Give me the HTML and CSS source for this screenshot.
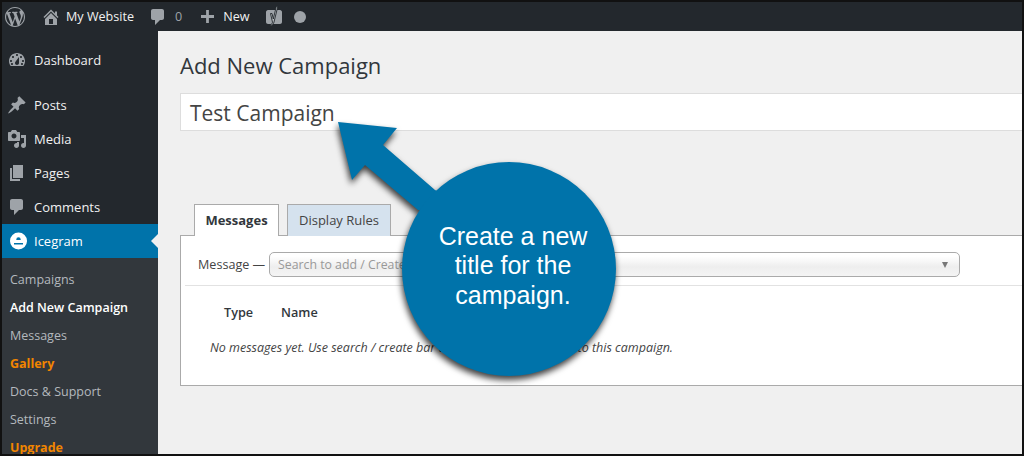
FILE: index.html
```html
<!DOCTYPE html>
<html lang="en">
<head>
<meta charset="utf-8">
<title>Add New Campaign</title>
<link rel="stylesheet" href="styles.css">
</head>
<body>
<div class="frame">
  <header class="adminbar">
    <svg class="bar-icon wp" viewBox="0 0 20 20"><path d="M20 10c0-5.51-4.49-10-10-10C4.48 0 0 4.49 0 10c0 5.52 4.48 10 10 10 5.51 0 10-4.48 10-10zM7.78 15.37L4.37 6.22c.55-.02 1.17-.08 1.17-.08.5-.06.44-1.13-.06-1.11 0 0-1.45.11-2.37.11-.18 0-.37 0-.58-.01C4.12 2.69 6.87 1.11 10 1.11c2.33 0 4.45.87 6.05 2.34-.68-.11-1.65.39-1.65 1.58 0 .74.45 1.36.9 2.1.35.61.55 1.36.55 2.46 0 1.49-1.4 5-1.4 5l-3.03-8.37c.54-.02.82-.17.82-.17.5-.05.44-1.25-.06-1.22 0 0-1.44.12-2.38.12-.87 0-2.33-.12-2.33-.12-.5-.03-.56 1.2-.06 1.22l.92.08 1.26 3.41zM17.41 10c.24-.64.74-1.87.43-4.25.7 1.29 1.05 2.71 1.05 4.25 0 3.29-1.73 6.24-4.4 7.78.97-2.59 1.94-5.2 2.92-7.78zM6.1 18.09C3.12 16.65 1.11 13.53 1.11 10c0-1.3.23-2.48.72-3.59C3.25 10.3 4.67 14.2 6.1 18.09zm4.03-6.63l2.58 6.98c-.86.29-1.76.45-2.71.45-.79 0-1.57-.11-2.29-.33.81-2.38 1.62-4.74 2.42-7.1z"/></svg>
    <svg class="bar-icon home" viewBox="0 0 20 20"><path d="M16 8.5l1.53 1.53-1.06 1.06L10 4.62l-6.47 6.47-1.06-1.06L10 2.5l4 4v-2h2v4zm-6-2.46l6 5.99V18H4v-5.97zM12 17v-5H8v5h4z"/></svg>
    <span class="bar-text site">My Website</span>
    <svg class="bar-icon bubble" viewBox="0 0 20 20"><path d="M5 2h9c1.100 0 2 .9 2 2v7c0 1.100-.9 2-2 2h-2l-5 5v-5H5c-1.100 0-2-.9-2-2V4c0-1.100.9-2 2-2z"/></svg>
    <span class="bar-text count">0</span>
    <svg class="bar-icon plus" viewBox="0 0 14 14"><path d="M5.500 0h3v5.500H14v3H8.500V14h-3V8.500H0v-3h5.500z"/></svg>
    <span class="bar-text new">New</span>
    <svg class="bar-icon yoast" viewBox="0 0 18 21"><path class="yoast-box" d="M3 4h12c1 0 2 1 2 2v10c0 1-1 2-2 2H3c-1 0-2-1-2-2V6c0-1 1-2 2-2z"/><path class="yoast-y" d="M5.500 7.500h1.500L8.300 13l3-12.500h1.500L9 16c-.5 2-1.500 3.500-3.500 4l-.3-1c1.300-.4 2-1.200 2.300-2.800z"/></svg>
    <span class="status-dot"></span>
  </header>

  <div class="body-row">
    <nav class="sidebar">
      <div class="menu-item first">
        <svg class="menu-icon" viewBox="0 0 20 20"><path d="M3.760 16h12.480c1.100-1.370 1.760-3.110 1.760-5 0-4.420-3.580-8-8-8s-8 3.580-8 8c0 1.890.66 3.630 1.760 5zM10 4c.55 0 1 .45 1 1s-.45 1-1 1-1-.45-1-1 .45-1 1-1zM6 6c.55 0 1 .45 1 1s-.45 1-1 1-1-.45-1-1 .45-1 1-1zm8 0c.55 0 1 .45 1 1s-.45 1-1 1-1-.45-1-1 .45-1 1-1zm-5.370 5.550L12 7v6c0 1.100-.9 2-2 2s-2-.9-2-2c0-.57.24-1.080.63-1.450zM4 10c.55 0 1 .45 1 1s-.45 1-1 1-1-.45-1-1 .45-1 1-1zm12 0c.55 0 1 .45 1 1s-.45 1-1 1-1-.45-1-1 .45-1 1-1zM5 15c-.55 0-1-.45-1-1s.45-1 1-1 1 .45 1 1-.45 1-1 1zm10 0c-.55 0-1-.45-1-1s.45-1 1-1 1 .45 1 1-.45 1-1 1z"/></svg>
        <span>Dashboard</span>
      </div>
      <div class="menu-item group-start">
        <svg class="menu-icon" viewBox="0 0 20 20"><path d="M10.440 3.020l1.820-1.820 6.360 6.350-1.830 1.820c-1.050-.68-2.480-.57-3.410.36l-.75.75c-.92.93-1.040 2.350-.35 3.410l-1.830 1.820-2.410-2.410-2.800 2.790c-.42.42-3.380 2.710-3.800 2.290s1.860-3.390 2.280-3.810l2.790-2.790L4.100 9.360l1.830-1.820c1.050.69 2.480.57 3.400-.36l.75-.75c.93-.92 1.050-2.350.36-3.410z"/></svg>
        <span>Posts</span>
      </div>
      <div class="menu-item">
        <svg class="menu-icon" viewBox="0 0 20 20"><path d="M13 11V4c0-.55-.45-1-1-1h-1.670L9 1H5L3.670 3H2c-.55 0-1 .45-1 1v7c0 .55.45 1 1 1h10c.55 0 1-.45 1-1zM7 4.500c1.380 0 2.500 1.120 2.500 2.500S8.380 9.500 7 9.500 4.500 8.380 4.500 7 5.620 4.500 7 4.500zM14 6h5v10.500c0 1.380-1.120 2.500-2.500 2.500S14 17.880 14 16.500s1.120-2.500 2.500-2.500c.17 0 .34.02.5.05V9h-3V6zm-4 8.050V13h2v3.500c0 1.380-1.120 2.500-2.500 2.500S7 17.880 7 16.500 8.120 14 9.500 14c.17 0 .34.02.5.05z"/></svg>
        <span>Media</span>
      </div>
      <div class="menu-item">
        <svg class="menu-icon" viewBox="0 0 20 20"><path d="M6 15V2h10v13H6zm-1 1h8v2H3V5h2v11z"/></svg>
        <span>Pages</span>
      </div>
      <div class="menu-item">
        <svg class="menu-icon" viewBox="0 0 20 20"><path d="M5 2h9c1.100 0 2 .9 2 2v7c0 1.100-.9 2-2 2h-2l-5 5v-5H5c-1.100 0-2-.9-2-2V4c0-1.100.9-2 2-2z"/></svg>
        <span>Comments</span>
      </div>
      <div class="menu-item active">
        <svg class="menu-icon ice" viewBox="-1.500 0 20 20"><path fill-rule="evenodd" d="M10 1.500a8.500 8.500 0 1 1 0 17 8.500 8.500 0 0 1 0-17zM7.800 8.500a2.200 2.200 0 0 1 4.400 0v.5H7.800zM5.500 12v1.500h9V12z"/></svg>
        <span>Icegram</span>
      </div>
      <ul class="submenu">
        <li>Campaigns</li>
        <li class="current">Add New Campaign</li>
        <li>Messages</li>
        <li class="accent">Gallery</li>
        <li>Docs &amp; Support</li>
        <li>Settings</li>
        <li class="accent">Upgrade</li>
      </ul>
    </nav>

    <main class="main">
      <h1 class="title">Add New Campaign</h1>
      <div class="title-input">Test Campaign</div>
      <div class="tabs">
        <div class="tab selected">Messages</div>
        <div class="tab">Display Rules</div>
      </div>
      <section class="panel">
        <div class="message-row">
          <span class="message-label">Message —</span>
          <div class="select">
            <span>Search to add / Create new</span>
            <span class="caret"></span>
          </div>
        </div>
        <div class="rule"></div>
        <div class="table-head">
          <span class="col-type">Type</span>
          <span>Name</span>
        </div>
        <p class="empty">No messages yet. Use search / create bar above to add messages <span class="empty-tail">to this campaign.</span></p>
      </section>
    </main>
  </div>

  <div class="callout">
    <svg class="callout-shape" viewBox="0 0 300 270" width="300" height="270">
      <path d="M8 2L67 8 53 25 105 70 170 100 88 90 35 45 22 60z"/>
      <circle cx="179" cy="149" r="107"/>
    </svg>
    <p class="callout-text">Create a new<br>title for the<br>campaign.</p>
  </div>
</div>
</body>
</html>
```

FILE: styles.css
```css
* { box-sizing: border-box; }
html, body { margin: 0; padding: 0; }
body {
  width: 1024px;
  height: 456px;
  overflow: hidden;
  font-family: "Open Sans", sans-serif;
  color: #32373c;
}
.frame {
  position: relative;
  width: 1024px;
  height: 456px;
  border: 2px solid #111;
  display: flex;
  flex-direction: column;
  overflow: hidden;
  background: #f0f0f0;
}

/* top bar */
.adminbar {
  height: 29px;
  flex: none;
  background: #23282d;
  display: flex;
  align-items: center;
  color: #f1f1f1;
  font-size: 12.600px;
}
.bar-icon { display: block; fill: #9ea3a8; flex: none; }
.wp { width: 20px; height: 20px; margin-left: 3px; }
.home { width: 20px; height: 20px; margin-left: 16px; }
.site { margin-left: 5px; }
.bubble { width: 20px; height: 20px; margin-left: 14px; }
.count { margin-left: 7px; color: #9ea3a8; }
.plus { width: 13px; height: 13px; margin-left: 19px; }
.new { margin-left: 9px; }
.yoast { width: 18px; height: 21px; margin-left: 15px; }
.yoast-box { fill: #9ea3a8; }
.yoast-y { fill: #b8bcc0; stroke: #23282d; stroke-width: .9; }
.status-dot {
  width: 12px;
  height: 12px;
  margin-left: 11px;
  border-radius: 50%;
  background: #9ea3a8;
}

.body-row { flex: 1; display: flex; min-height: 0; }

/* sidebar */
.sidebar {
  width: 156px;
  flex: none;
  background: #23282d;
  color: #f1f1f1;
  font-size: 13px;
  padding-top: 12px;
  overflow: hidden;
}
.menu-item {
  height: 34px;
  display: flex;
  align-items: center;
  padding-left: 5px;
  gap: 7px;
  position: relative;
}
.group-start { margin-top: 11px; }
.menu-icon { width: 20px; height: 20px; fill: #9ea3a8; flex: none; }
.active { background: #0073aa; color: #fff; }
.active::after {
  content: "";
  position: absolute;
  right: 0;
  top: 10px;
  border: 7px solid transparent;
  border-right-color: #f0f0f0;
  border-left-width: 0;
}
.ice { fill: #fff; }
.submenu {
  list-style: none;
  margin: 0;
  padding: 8px 0;
  background: #32373c;
  color: #b4b9be;
  font-size: 12.500px;
}
.submenu li {
  height: 28px;
  line-height: 28px;
  padding-left: 8px;
  white-space: nowrap;
}
.submenu .current { color: #fff; font-weight: 600; }
.submenu .accent { color: #f18500; font-weight: 700; }

/* main */
.main {
  flex: 1;
  min-width: 0;
  padding: 20px 0 0 22px;
  background: #f0f0f0;
}
.title {
  margin: 0;
  height: 28px;
  line-height: 28px;
  font-size: 22px;
  font-weight: 400;
  color: #32373c;
  white-space: nowrap;
}
.title-input {
  margin-top: 14px;
  height: 38px;
  background: #fff;
  border: 1px solid #ddd;
  border-right: 0;
  padding-left: 9px;
  line-height: 38px;
  font-size: 21px;
  color: #444;
}
.tabs {
  margin-top: 73px;
  padding-left: 14px;
  display: flex;
  align-items: flex-end;
  gap: 8px;
  height: 32px;
  font-size: 13px;
}
.tab {
  height: 32px;
  padding: 0 10px;
  line-height: 30px;
  width: 104px;
  text-align: center;
  border: 1px solid #aaa;
  border-bottom: 0;
  background: #d5e2ee;
  color: #444;
  white-space: nowrap;
}
.tab.selected {
  width: 85px;
  background: #fff;
  color: #32373c;
  font-weight: 700;
  position: relative;
  z-index: 1;
}
.panel {
  margin-top: -1px;
  height: 151px;
  background: #fff;
  border: 1px solid #aaa;
  border-right: 0;
  padding-top: 16px;
}
.message-row {
  display: flex;
  align-items: center;
  height: 25px;
  padding-left: 17px;
  font-size: 12.600px;
}
.message-label { width: 71px; flex: none; color: #444; white-space: nowrap; }
.select {
  width: 691px;
  height: 25px;
  flex: none;
  border: 1px solid #aaa;
  border-radius: 5px;
  background: linear-gradient(#fff 15%, #eee 60%, #f4f4f4);
  color: #999;
  font-size: 12.300px;
  padding: 0 11px 0 8px;
  display: flex;
  align-items: center;
  justify-content: space-between;
}
.caret {
  border: 3.500px solid transparent;
  border-top: 6px solid #777;
  border-bottom: 0;
}
.rule { height: 1px; background: #e2e2e2; margin: 8px 0 0 4px; }
.table-head {
  display: flex;
  margin-top: 16px;
  padding-left: 43px;
  height: 20px;
  line-height: 20px;
  font-size: 12.700px;
  font-weight: 600;
  color: #32373c;
}
.col-type { width: 57px; }
.empty {
  margin: 16px 0 0 29px;
  height: 20px;
  line-height: 20px;
  font-size: 12.500px;
  font-style: italic;
  color: #444;
  white-space: nowrap;
}
.empty-tail { margin-left: 7px; }

/* callout */
.callout {
  position: absolute;
  left: 328px;
  top: 118px;
  width: 300px;
  height: 270px;
}
.callout-shape {
  display: block;
  fill: #0073aa;
  overflow: visible;
  filter: drop-shadow(-1px 4px 3px rgba(0,0,0,.75));
}
.callout-text {
  position: absolute;
  left: 76px;
  top: 101.500px;
  width: 214px;
  margin: 0;
  text-align: center;
  font-family: "Liberation Sans", Arial, sans-serif;
  font-size: 25px;
  line-height: 29.500px;
  color: #fff;
}
```
